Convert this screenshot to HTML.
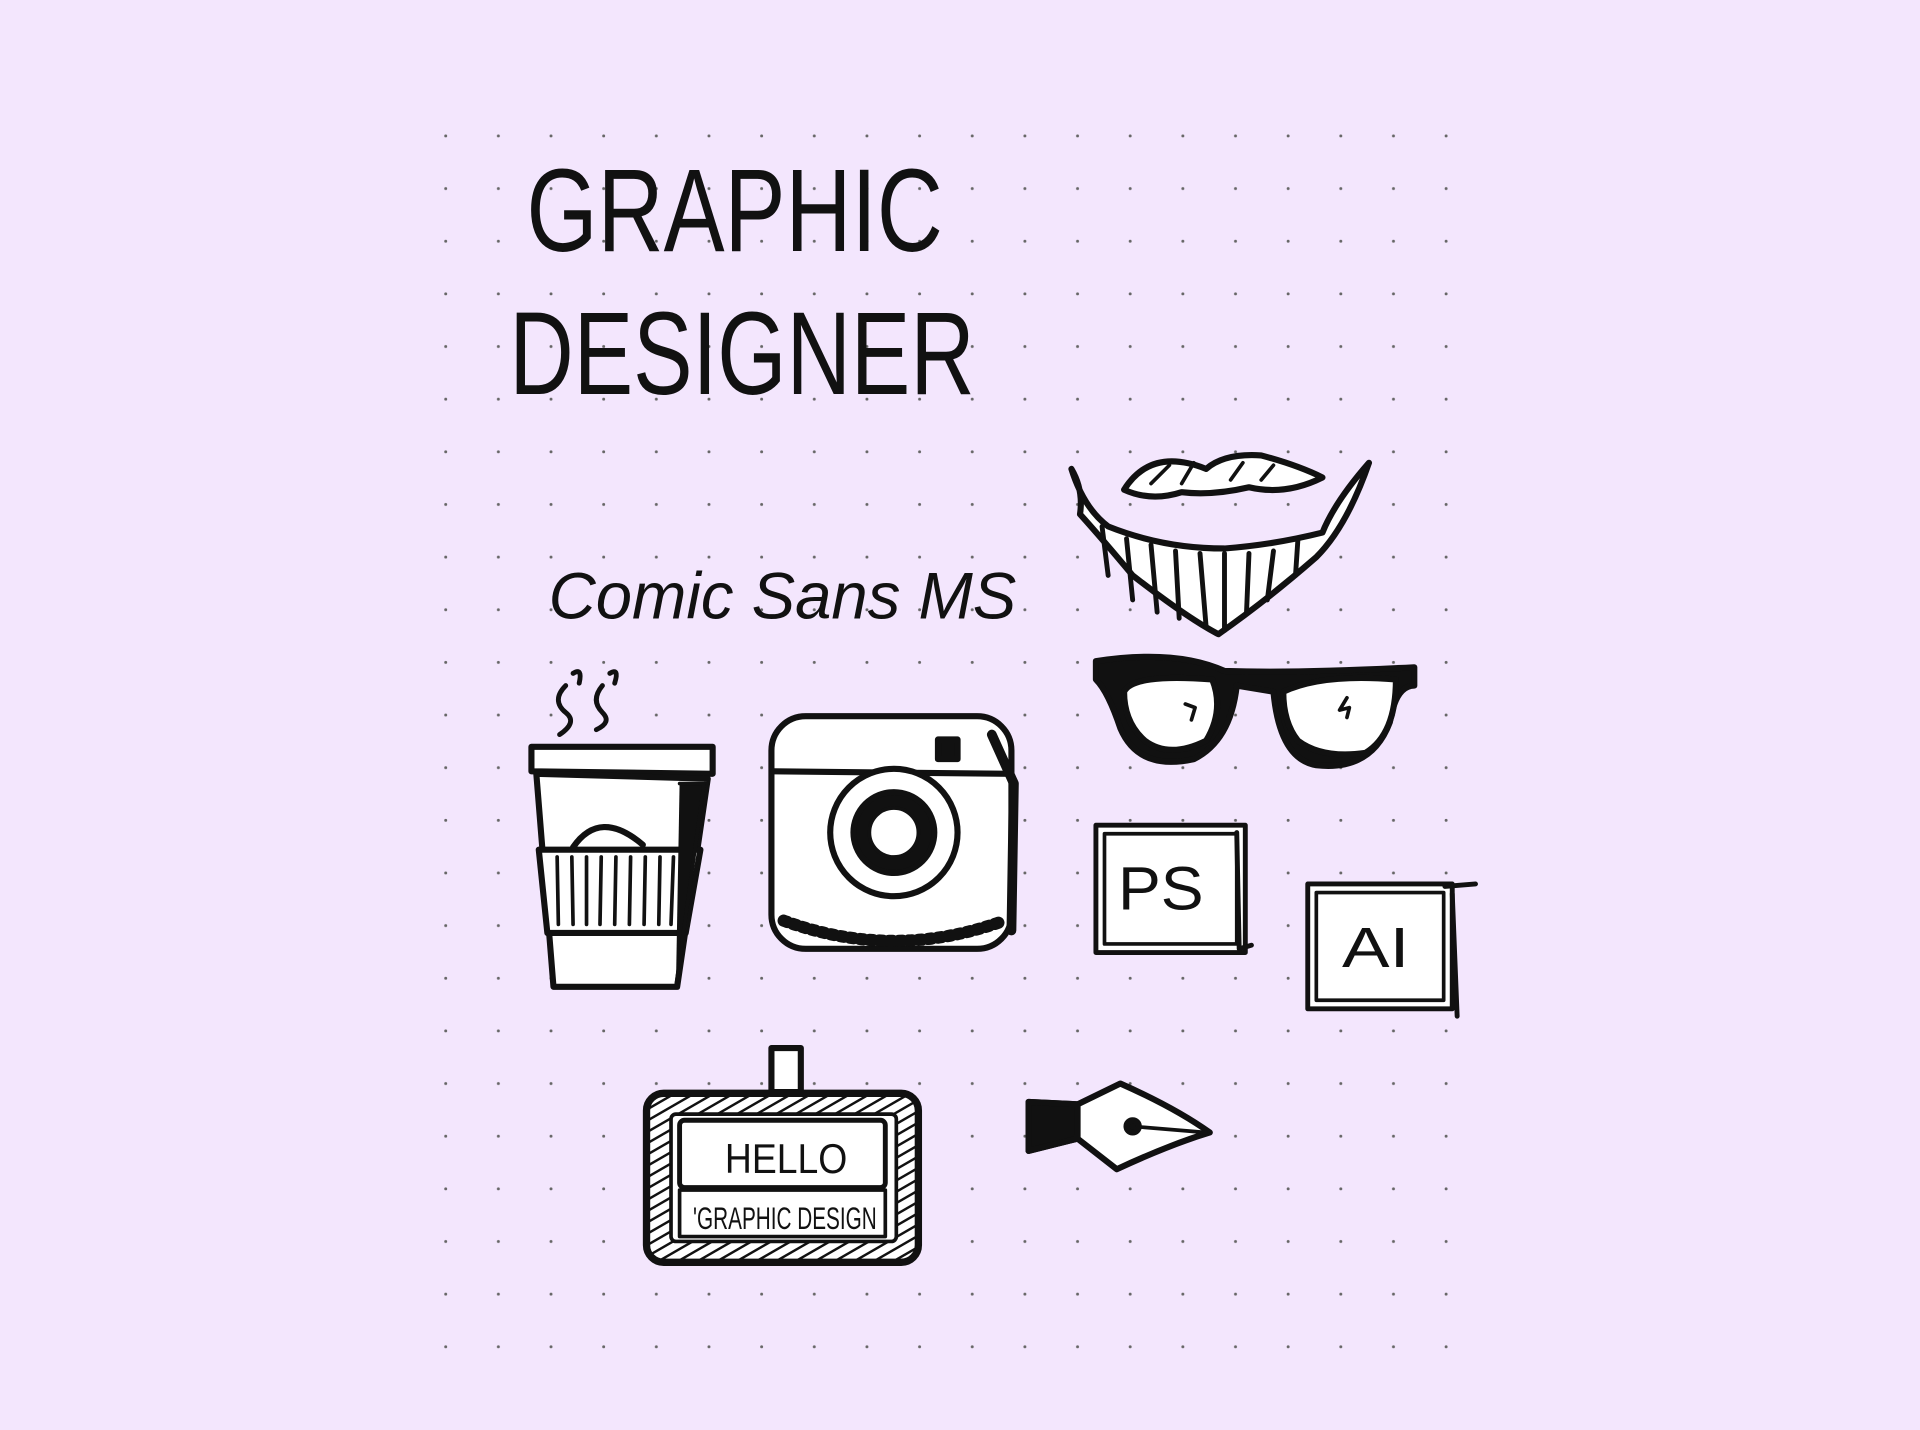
<!DOCTYPE html>
<html><head><meta charset="utf-8"><style>
html,body{margin:0;padding:0;background:#f3e6fd;width:1920px;height:1430px;overflow:hidden}
svg{display:block}
</style></head><body>
<svg width="1920" height="1430" viewBox="0 0 1568 1168" preserveAspectRatio="none" xmlns="http://www.w3.org/2000/svg">
<defs>
<pattern id="dots" x="0" y="0" width="43" height="43" patternUnits="userSpaceOnUse">
<circle cx="20" cy="25" r="1.2" fill="#666"/>
</pattern>
<pattern id="hatch" width="8" height="8" patternUnits="userSpaceOnUse" patternTransform="rotate(60)">
<rect width="8" height="8" fill="#fff"/>
<line x1="0" y1="0" x2="0" y2="8" stroke="#111" stroke-width="4"/>
</pattern>
</defs>
<rect width="1568" height="1168" fill="#f3e6fd"/>
<rect x="345" y="100" width="870" height="1030" fill="url(#dots)"/>
<text x="430" y="205" font-family="Liberation Sans, sans-serif" font-size="96" fill="#111" textLength="340" lengthAdjust="spacingAndGlyphs">GRAPHIC</text>
<text x="416" y="322" font-family="Liberation Sans, sans-serif" font-size="96" fill="#111" textLength="380" lengthAdjust="spacingAndGlyphs">DESIGNER</text>
<text x="448" y="505" font-family="Liberation Sans, sans-serif" font-style="italic" font-size="54" fill="#111" textLength="382" lengthAdjust="spacingAndGlyphs">Comic  Sans MS</text>
<g fill="#fff" stroke="#111" stroke-width="5" stroke-linejoin="round" stroke-linecap="round">
<path d="M434 610 L582 610 L582 632 L434 630 Z"/>
<path d="M438 632 L578 636 L553 806 L452 806 Z"/>
<path d="M440 694 L572 694 L560 762 L447 762 Z" fill="#fff"/>
<path d="M468 692 Q490 660 525 690" fill="none"/>
<path d="M455 700 L456 755 M467 700 L468 755 M479 700 L479 755 M491 700 L490 755 M503 700 L502 755 M515 700 L514 755 M527 700 L526 755 M539 700 L538 755 M550 700 L548 755" stroke-width="3"/>
<path d="M555 640 L575 640 L552 806" fill="#111" stroke-width="3"/>
<path d="M462 560 q-12 12 0 22 q10 8 -5 18 M468 550 q8 -5 5 8 M492 560 q-10 12 0 22 q8 8 -5 14 M498 550 q8 -5 4 8" fill="none" stroke-width="4"/>
<rect x="630" y="585" width="196" height="190" rx="28"/>
<path d="M632 630 L826 632" fill="none"/>
<path d="M640 752 Q730 785 820 752" fill="none" stroke-width="10" stroke-dasharray="3 5"/>
<circle cx="730" cy="680" r="52"/>
<circle cx="730" cy="680" r="33" fill="#111"/>
<circle cx="730" cy="680" r="20" fill="#fff" stroke-width="3"/>
<rect x="766" y="604" width="16" height="16" fill="#111"/>
<path d="M810 600 L828 640 L826 760" fill="none" stroke-width="8"/>
<path d="M875 383 Q885 400 882 420 Q900 440 925 470 Q970 505 995 518 Q1035 490 1075 455 Q1100 430 1118 378 Q1090 410 1080 435 Q1040 445 1000 448 Q950 448 905 430 Q885 415 875 383 Z" fill="#fff"/>
<path d="M900 430 L905 470 M920 440 L925 490 M940 445 L945 500 M960 450 L963 505 M980 452 L985 512 M1000 452 L1000 515 M1020 452 L1018 500 M1040 450 L1035 490 M1060 440 L1058 470" stroke-width="4"/>
<path d="M918 400 Q940 365 985 383 Q1000 370 1030 372 Q1060 380 1080 390 Q1050 405 1020 398 Q990 405 965 402 Q940 410 918 400 Z" fill="#fff"/>
<path d="M940 395 L955 380 M965 395 L975 378 M1005 392 L1015 378 M1030 392 L1040 380" stroke-width="3"/>
<path d="M895 540 Q960 530 1000 548 Q1060 550 1155 545 L1155 560 Q1140 560 1135 590 Q1120 630 1075 625 Q1045 620 1040 565 L1010 560 Q1005 605 975 620 Q930 630 915 595 Q905 565 895 555 Z" fill="#111"/>
<path d="M918 565 Q925 550 990 555 Q1000 580 985 605 Q955 620 935 605 Q918 590 918 565 Z"/>
<path d="M1048 565 Q1080 550 1140 555 Q1140 600 1115 615 Q1080 620 1060 605 Q1048 590 1048 565 Z"/>
<path d="M968 575 l8 3 l-3 10 M1100 570 l-6 10 l8 -2 l-2 8" fill="none" stroke-width="3"/>
<rect x="895" y="674" width="122" height="104" stroke-width="4"/>
<rect x="902" y="681" width="108" height="90" stroke-width="3"/>
<path d="M1010 680 L1012 775 L1022 772" fill="none" stroke-width="4"/>
<rect x="1068" y="722" width="118" height="102" stroke-width="4"/>
<rect x="1075" y="729" width="104" height="88" stroke-width="3"/>
<path d="M1180 724 L1205 722 M1186 730 L1190 830" fill="none" stroke-width="4"/>
<rect x="630" y="856" width="24" height="36" stroke-width="5"/>
<rect x="528" y="893" width="222" height="138" rx="14" fill="url(#hatch)" stroke-width="6"/>
<rect x="548" y="910" width="184" height="104" rx="4" fill="#fff" stroke-width="3"/>
<rect x="555" y="915" width="168" height="55" rx="4" fill="#fff" stroke-width="4"/>
<rect x="555" y="972" width="168" height="38" fill="#fff" stroke-width="3"/>
<path d="M840 900 L880 902 L915 885 Q960 905 988 925 Q955 935 912 955 L880 930 L840 940 Z" fill="#fff"/>
<path d="M840 900 L880 902 L880 930 L840 940 Z" fill="#111"/>
<path d="M925 920 L985 925" stroke-width="3"/>
<circle cx="925" cy="920" r="5" fill="#111"/>
</g>
<g font-family="Liberation Sans, sans-serif" fill="#111">
<text x="913" y="743" font-size="50" textLength="70" lengthAdjust="spacingAndGlyphs">PS</text>
<text x="1096" y="790" font-size="46" textLength="55" lengthAdjust="spacingAndGlyphs">AI</text>
<text x="592" y="958" font-size="34" textLength="100" lengthAdjust="spacingAndGlyphs">HELLO</text>
<text x="566" y="1004" font-size="26" textLength="150" lengthAdjust="spacingAndGlyphs">'GRAPHIC DESIGN</text>
</g>
</svg>
</body></html>
